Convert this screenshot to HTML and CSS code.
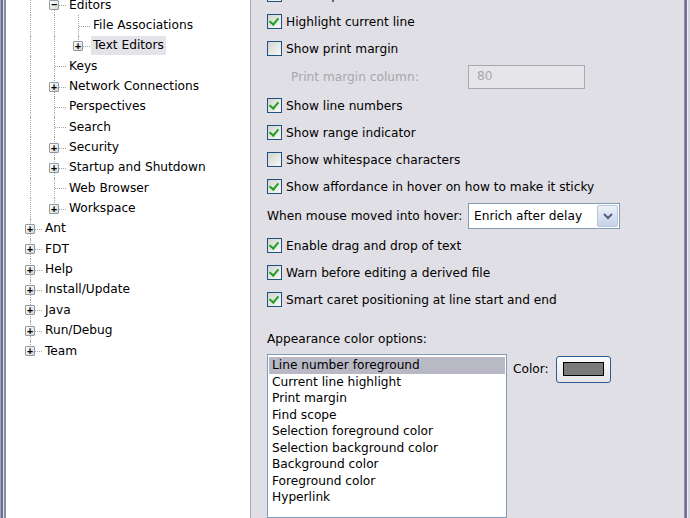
FILE: index.html
```html
<!DOCTYPE html>
<html lang="en">
<head>
    <meta charset="UTF-8">
    <title>Preferences - Text Editors</title>
    <link rel="stylesheet" href="styles.css">
</head>
<body>
    <div id="prefs-window">
        <div class="frame-left"></div>

        <div id="tree-pane">
            <ul class="tree">
                <li class="row"><span class="cell line"></span><span class="cell tee"><i class="box">&minus;</i></span><span class="label">Editors</span></li>
                <li class="row"><span class="cell line"></span><span class="cell line"></span><span class="cell tee"></span><span class="label">File Associations</span></li>
                <li class="row"><span class="cell line"></span><span class="cell line"></span><span class="cell end"><i class="box">+</i></span><span class="label selected">Text Editors</span></li>
                <li class="row"><span class="cell line"></span><span class="cell tee"></span><span class="label">Keys</span></li>
                <li class="row"><span class="cell line"></span><span class="cell tee"><i class="box">+</i></span><span class="label">Network Connections</span></li>
                <li class="row"><span class="cell line"></span><span class="cell tee"></span><span class="label">Perspectives</span></li>
                <li class="row"><span class="cell line"></span><span class="cell tee"></span><span class="label">Search</span></li>
                <li class="row"><span class="cell line"></span><span class="cell tee"><i class="box">+</i></span><span class="label">Security</span></li>
                <li class="row"><span class="cell line"></span><span class="cell tee"><i class="box">+</i></span><span class="label">Startup and Shutdown</span></li>
                <li class="row"><span class="cell line"></span><span class="cell tee"></span><span class="label">Web Browser</span></li>
                <li class="row"><span class="cell line"></span><span class="cell end"><i class="box">+</i></span><span class="label">Workspace</span></li>
                <li class="row"><span class="cell tee"><i class="box">+</i></span><span class="label">Ant</span></li>
                <li class="row"><span class="cell tee"><i class="box">+</i></span><span class="label">FDT</span></li>
                <li class="row"><span class="cell tee"><i class="box">+</i></span><span class="label">Help</span></li>
                <li class="row"><span class="cell tee"><i class="box">+</i></span><span class="label">Install/Update</span></li>
                <li class="row"><span class="cell tee"><i class="box">+</i></span><span class="label">Java</span></li>
                <li class="row"><span class="cell tee"><i class="box">+</i></span><span class="label">Run/Debug</span></li>
                <li class="row"><span class="cell end"><i class="box">+</i></span><span class="label">Team</span></li>
            </ul>
        </div>

        <div id="settings-pane">
            <label class="check-row"><span class="check on"></span>Insert spaces for tabs</label>
            <label class="check-row"><span class="check on"></span>Highlight current line</label>
            <label class="check-row"><span class="check"></span>Show print margin</label>
            <div class="field-row">
                <span class="field-label disabled">Print margin column:</span>
                <span class="textbox disabled">80</span>
            </div>
            <label class="check-row"><span class="check on"></span>Show line numbers</label>
            <label class="check-row"><span class="check on"></span>Show range indicator</label>
            <label class="check-row"><span class="check"></span>Show whitespace characters</label>
            <label class="check-row"><span class="check on"></span>Show affordance in hover on how to make it sticky</label>
            <div class="field-row hover-row">
                <span class="field-label">When mouse moved into hover:</span>
                <span class="combo">
                    <span class="combo-text">Enrich after delay</span>
                    <span class="combo-btn">
                        <svg width="10" height="8" viewBox="0 0 10 8"><path d="M1 2 L5 6 L9 2" fill="none" stroke="#4d6185" stroke-width="2"/></svg>
                    </span>
                </span>
            </div>
            <label class="check-row"><span class="check on"></span>Enable drag and drop of text</label>
            <label class="check-row"><span class="check on"></span>Warn before editing a derived file</label>
            <label class="check-row"><span class="check on"></span>Smart caret positioning at line start and end</label>

            <div class="section-label">Appearance color options:</div>
            <div class="color-options">
                <ul class="listbox">
                    <li class="selected">Line number foreground</li>
                    <li>Current line highlight</li>
                    <li>Print margin</li>
                    <li>Find scope</li>
                    <li>Selection foreground color</li>
                    <li>Selection background color</li>
                    <li>Background color</li>
                    <li>Foreground color</li>
                    <li>Hyperlink</li>
                </ul>
                <div class="color-picker">
                    <span>Color:</span>
                    <span class="color-btn"><span class="swatch"></span></span>
                </div>
            </div>
        </div>

        <div class="frame-right"></div>
    </div>
</body>
</html>
```

FILE: styles.css
```css
:root {
    --panel-bg: #e0dfe5;
    --frame-dark: #7c7c9c;
    --xp-border: #7f9db9;
    --check-border: #1c5180;
    --text-color: #000000;
    --dots: #a3a3a3;
}

* {
    margin: 0;
    padding: 0;
    box-sizing: border-box;
}

html, body {
    height: 100%;
    overflow: hidden;
}

body {
    font-family: 'DejaVu Sans', 'Liberation Sans', sans-serif;
    font-size: 12.2px;
    color: var(--text-color);
    background-color: var(--panel-bg);
}

#prefs-window {
    display: flex;
    height: 518px;
    overflow: hidden;
}

/* window frame stripes */
.frame-left {
    width: 6px;
    flex-shrink: 0;
    border-left: 1px solid #a4a4bc;
    background: linear-gradient(to right, #6e6e92 0 2px, #e6e6f0 2px 3px, #8a8aaa 3px 5px);
}

.frame-right {
    width: 6px;
    flex-shrink: 0;
    background: linear-gradient(to right, #9090ac 0 1px, #6e6e92 1px 3px, #f2f2f6 3px 4px, #d4d4de 4px 6px);
}

/* tree */
#tree-pane {
    width: 245px;
    flex-shrink: 0;
    background-color: #ffffff;
    border-right: 1px solid #a8a8b4;
    padding-left: 12px;
    overflow: hidden;
}

.tree {
    list-style: none;
    margin-top: -5px;
}

.row {
    display: flex;
    align-items: center;
    height: 20.35px;
}

.cell {
    position: relative;
    width: 24px;
    height: 100%;
    flex-shrink: 0;
}

.cell.line::before,
.cell.tee::before,
.cell.end::before {
    content: '';
    position: absolute;
    left: 12px;
    top: 0;
    bottom: 0;
    border-left: 1px dotted var(--dots);
}

.cell.end::before {
    bottom: 50%;
}

.cell.tee::after,
.cell.end::after {
    content: '';
    position: absolute;
    left: 13px;
    right: 0;
    top: 50%;
    border-top: 1px dotted var(--dots);
}

.box {
    position: absolute;
    z-index: 1;
    left: 7px;
    top: 50%;
    width: 10px;
    height: 10px;
    margin-top: -5px;
    background: linear-gradient(135deg, #ffffff, #d8d8d0);
    border: 1px solid #8c9aa8;
    border-radius: 1px;
    font-style: normal;
    font-family: 'DejaVu Sans Mono', monospace;
    font-size: 10px;
    line-height: 8px;
    text-align: center;
    color: #000;
    font-weight: bold;
}

.label {
    margin-left: 1px;
    padding: 2px 2px 3px;
    white-space: nowrap;
}

.label.selected {
    background-color: #e4e4e8;
}

/* settings */
#settings-pane {
    flex: 1;
    display: flex;
    flex-direction: column;
    padding-left: 16px;
    margin-top: -19px;
}

#settings-pane > * {
    flex-shrink: 0;
}

.check-row {
    display: flex;
    align-items: center;
    gap: 4px;
    height: 27px;
    white-space: nowrap;
}

.check {
    position: relative;
    width: 15px;
    height: 15px;
    flex-shrink: 0;
    border: 1px solid var(--check-border);
    background: linear-gradient(135deg, #d4d4ce, #f8f8f6);
}

.check.on::after {
    content: '';
    position: absolute;
    left: 3px;
    top: 1px;
    width: 4px;
    height: 7px;
    border: solid #21a121;
    border-width: 0 2.5px 2.5px 0;
    transform: rotate(40deg);
}

.field-row {
    display: flex;
    align-items: center;
    height: 30px;
}

.field-label {
    width: 201px;
    flex-shrink: 0;
    white-space: nowrap;
}

.field-label.disabled {
    padding-left: 24px;
}

.disabled {
    color: #a7a6aa;
}

.textbox {
    width: 117px;
    height: 24px;
    padding: 3px 8px;
    border: 1px solid #a8a8b0;
    background-color: #e6e5ea;
}

.hover-row {
    height: 32px;
}

.combo {
    display: flex;
    align-items: center;
    width: 152px;
    height: 26px;
    border: 1px solid var(--xp-border);
    background-color: #ffffff;
    padding: 1px;
}

.combo-text {
    flex: 1;
    padding-left: 4px;
}

.combo-btn {
    width: 21px;
    height: 100%;
    display: flex;
    align-items: center;
    justify-content: center;
    border: 1px solid #b9c6dc;
    border-radius: 2px;
    background: linear-gradient(#eef1f8, #c7d2e8);
}

.section-label {
    margin-top: 19px;
    height: 15px;
    line-height: 15px;
}

.color-options {
    display: flex;
    margin-top: 7px;
}

.listbox {
    list-style: none;
    width: 240px;
    height: 164px;
    border: 1px solid var(--xp-border);
    background-color: #ffffff;
    padding: 2px 1px;
    flex-shrink: 0;
}

.listbox li {
    height: 16.5px;
    line-height: 16.5px;
    padding-left: 3px;
    white-space: nowrap;
}

.listbox li.selected {
    background-color: #b9b9c6;
}

.color-picker {
    display: flex;
    align-items: center;
    gap: 7px;
    height: 28px;
    margin-left: 6px;
    margin-top: 1px;
}

.color-btn {
    display: flex;
    align-items: center;
    justify-content: center;
    width: 55px;
    height: 27px;
    border: 1px solid #2c5c94;
    border-radius: 3px;
    background: linear-gradient(#fcfcfe, #e6e6ea);
}

.swatch {
    width: 41px;
    height: 14px;
    border: 1px solid #000000;
    background-color: #7a7a7a;
}
```
